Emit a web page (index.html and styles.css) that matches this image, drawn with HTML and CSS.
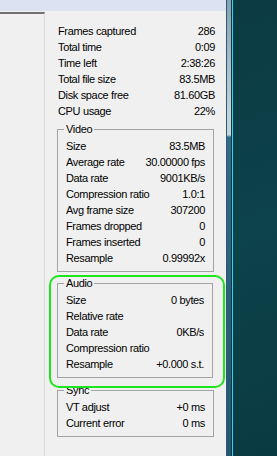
FILE: index.html
```html
<!DOCTYPE html>
<html lang="en">
<head>
  <meta charset="UTF-8" />
  <title>Capture status</title>
  <link rel="stylesheet" href="styles.css">
</head>
<body>
  <div class="window">
    <div class="titlebar"></div>
    <div class="client">
      <div class="sidebar"></div>
      <div class="stats">
        <div class="summary">
          <div class="row"><span>Frames captured</span><span>286</span></div>
          <div class="row"><span>Total time</span><span>0:09</span></div>
          <div class="row"><span>Time left</span><span>2:38:26</span></div>
          <div class="row"><span>Total file size</span><span>83.5MB</span></div>
          <div class="row"><span>Disk space free</span><span>81.60GB</span></div>
          <div class="row"><span>CPU usage</span><span>22%</span></div>
        </div>

        <fieldset class="group">
          <legend>Video</legend>
          <div class="row"><span>Size</span><span>83.5MB</span></div>
          <div class="row"><span>Average rate</span><span>30.00000 fps</span></div>
          <div class="row"><span>Data rate</span><span>9001KB/s</span></div>
          <div class="row"><span>Compression ratio</span><span>1.0:1</span></div>
          <div class="row"><span>Avg frame size</span><span>307200</span></div>
          <div class="row"><span>Frames dropped</span><span>0</span></div>
          <div class="row"><span>Frames inserted</span><span>0</span></div>
          <div class="row"><span>Resample</span><span>0.99992x</span></div>
        </fieldset>

        <div class="highlight">
          <fieldset class="group">
            <legend>Audio</legend>
            <div class="row"><span>Size</span><span>0 bytes</span></div>
            <div class="row"><span>Relative rate</span><span></span></div>
            <div class="row"><span>Data rate</span><span>0KB/s</span></div>
            <div class="row"><span>Compression ratio</span><span></span></div>
            <div class="row"><span>Resample</span><span>+0.000 s.t.</span></div>
          </fieldset>
        </div>

        <fieldset class="group sync">
          <legend>Sync</legend>
          <div class="row"><span>VT adjust</span><span>+0 ms</span></div>
          <div class="row"><span>Current error</span><span>0 ms</span></div>
        </fieldset>
      </div>
    </div>
  </div>
  <div class="frame-edge"></div>
  <div class="desktop"></div>
</body>
</html>
```

FILE: styles.css
```css
body {
  margin: 0;
  height: 456px;
  display: flex;
  background: #0c3c44;
  font-family: "Liberation Sans", Arial, sans-serif;
  font-size: 11px;
  letter-spacing: -0.35px;
  color: #000;
}

.window {
  width: 226px;
  display: flex;
  flex-direction: column;
  background: #f0f0f0;
}

.titlebar {
  height: 11px;
  background: #dde2f2;
}

.client {
  flex: 1;
  display: flex;
}

.sidebar {
  width: 44px;
  margin-top: 1px;
  border-top: 2px solid #727272;
  border-right: 1px solid #dadada;
}

.stats {
  flex: 1;
  padding: 12px 11px 0 12px;
}

.row {
  display: flex;
  justify-content: space-between;
  height: 16px;
  line-height: 16px;
  white-space: nowrap;
}

.summary .row {
  padding-left: 1px;
}

.group {
  margin: 4px 1px 0 0;
  padding: 3px 8px 5px;
  border: 1px solid #a3a3a3;
  min-inline-size: 0;
}

.group legend {
  padding: 0 2px;
  margin-left: -2px;
  line-height: 12px;
}

.highlight {
  position: relative;
  z-index: 1;
  margin: 3px -10px 0 -8px;
  padding: 0 9px 8px 6px;
  border: 2px solid #1ee61e;
  border-radius: 10px;
}

.highlight .group {
  margin-top: 0;
}

.group.sync {
  margin-top: -4px;
}

.frame-edge {
  width: 4px;
  border-left: 1px solid #3a5666;
  border-right: 1px solid #1b3641;
  box-shadow: 1px 0 0 #38d4ee;
  background: linear-gradient(to bottom, #7ea3b8 0, #bfd3dd 110px, #c3d6df 135px, #2d6d8e 137px, #1f5877 100%);
}

.desktop {
  flex: 1;
  margin-left: 1px;
  background: linear-gradient(160deg, #0b3a42 0%, #0d434b 50%, #0a3a41 100%);
}
```
